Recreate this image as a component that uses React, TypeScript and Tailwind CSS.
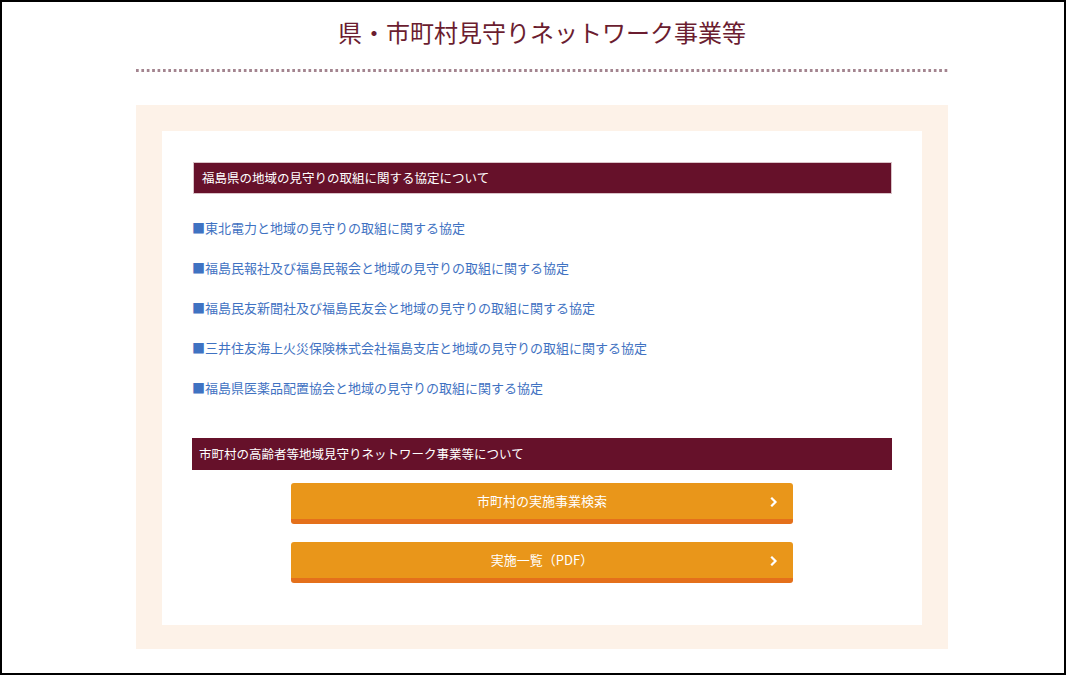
const links = [
  '■東北電力と地域の見守りの取組に関する協定',
  '■福島民報社及び福島民報会と地域の見守りの取組に関する協定',
  '■福島民友新聞社及び福島民友会と地域の見守りの取組に関する協定',
  '■三井住友海上火災保険株式会社福島支店と地域の見守りの取組に関する協定',
  '■福島県医薬品配置協会と地域の見守りの取組に関する協定',
];

const buttons = ['市町村の実施事業検索', '実施一覧（PDF）'];

function Chevron() {
  return (
    <svg width="8" height="10" viewBox="0 0 8 10" className="absolute right-[15px] top-[14px]">
      <path d="M2 1.5 L5.5 5 L2 8.5" fill="none" stroke="#ffffff" strokeWidth="2.2" strokeLinecap="square" />
    </svg>
  );
}

export default function App() {
  return (
    <div
      className="w-[1066px] h-[675px] border-2 border-black bg-white overflow-hidden"
      style={{ fontFamily: '"Noto Sans CJK JP", "Noto Sans", sans-serif' }}
    >
      <div className="ml-[134px] w-[812px]">
        {/* Heading */}
        <h1 className="mt-[12px] text-center text-[24px] leading-[36px] text-[#6b1d30]">
          県・市町村見守りネットワーク事業等
        </h1>
        <div className="mt-[19px] h-[3px] bg-[linear-gradient(to_right,#a3848f_3px,transparent_3px)] bg-[length:5.4px_3px] bg-repeat-x" />

        {/* Panel */}
        <div className="mt-[33px] h-[544px] bg-[#fdf2e8] pt-[26px] px-[26px]">
          <div className="h-[494px] bg-white pt-[31px]">
            <div className="ml-[31px] mr-[30px] h-[32px] bg-[#66112a] border border-[#d9c3c8] flex items-center pl-[8px] text-[12.5px] text-white">
              福島県の地域の見守りの取組に関する協定について
            </div>

            <ul className="mt-[14px] ml-[30px]">
              {links.map((t, i) => (
                <li key={i} className="h-[40px] leading-[40px] text-[13px] text-[#3f72c2]">
                  {t}
                </li>
              ))}
            </ul>

            <div className="mt-[30px] mx-[30px] h-[32px] bg-[#66112a] flex items-center pl-[7px] text-[12.5px] text-white">
              市町村の高齢者等地域見守りネットワーク事業等について
            </div>

            <div className="mt-[13px] flex flex-col items-center gap-[18px]">
              {buttons.map((b, i) => (
                <div
                  key={i}
                  className="relative w-[502px] h-[41px] rounded-[3px] bg-[#e9961a] border-b-[5px] border-[#e4701b] flex items-center justify-center text-[13px] text-white"
                >
                  {b}
                  <Chevron />
                </div>
              ))}
            </div>
          </div>
        </div>
      </div>
    </div>
  );
}
